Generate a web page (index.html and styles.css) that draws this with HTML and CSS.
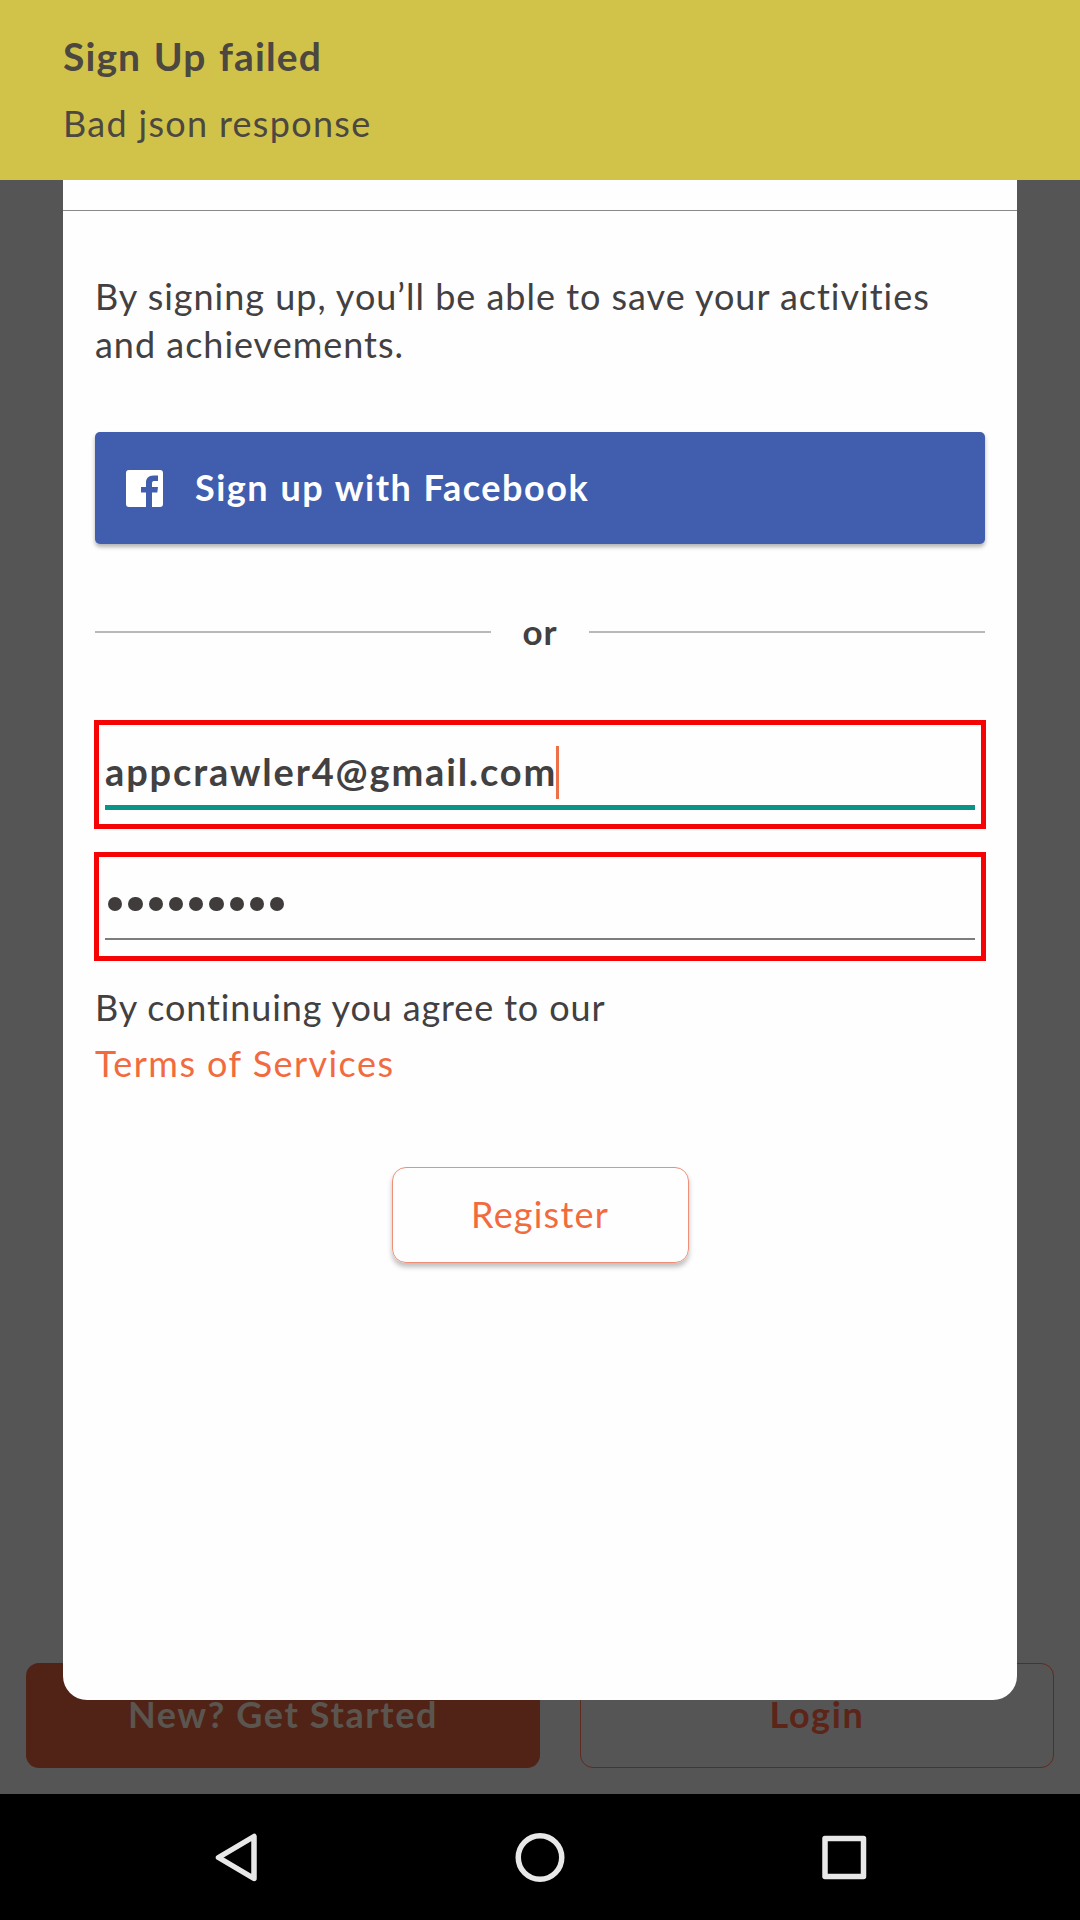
FILE: index.html
```
<!DOCTYPE html>
<html lang="en">
<head>
<meta charset="utf-8">
<title>Sign Up</title>
<link rel="stylesheet" href="styles.css">
</head>
<body>
<header class="banner">
  <h1 class="banner-title">Sign Up failed</h1>
  <p class="banner-text">Bad json response</p>
</header>
<main class="stage">
  <div class="welcome-actions">
    <div class="welcome-btn filled">New? Get Started</div>
    <div class="welcome-btn outlined">Login</div>
  </div>
  <section class="dialog">
    <div class="dialog-head"></div>
    <p class="intro">By signing up, you’ll be able to save your activities<br>and achievements.</p>
    <div class="facebook">
      <svg class="fb-icon" viewBox="0 0 37 37"><path fill="#fff" d="M3 0H34Q37 0 37 3V34Q37 37 34 37H26V22.500H31.300L32 17H26V13.500C26 11.500 27 11 28.500 11H32V5.500H27.500C22.500 5.500 20 8.500 20 12.500V17H15V22.500H20V37H3Q0 37 0 34V3Q0 0 3 0Z"/></svg>
      <span class="facebook-label">Sign up with Facebook</span>
    </div>
    <div class="or-row"><i class="rule"></i><span class="or">or</span><i class="rule"></i></div>
    <div class="field focused"><div class="field-line"><span class="email">appcrawler4@gmail.com</span><i class="caret"></i></div></div>
    <div class="field"><div class="field-line"><div class="dots"><i></i><i></i><i></i><i></i><i></i><i></i><i></i><i></i><i></i></div></div></div>
    <p class="agree">By continuing you agree to our</p>
    <p class="terms">Terms of Services</p>
    <div class="register">Register</div>
  </section>
</main>
<nav class="navbar">
  <svg class="nav-icon" viewBox="0 0 56 56"><path d="M10.500 28.500L46 7.500V49.500Z"/></svg>
  <svg class="nav-icon" viewBox="0 0 56 56"><circle cx="28" cy="28.500" r="21.750"/></svg>
  <svg class="nav-icon" viewBox="0 0 56 56"><rect x="9" y="9.500" width="38.500" height="38"/></svg>
</nav>
</body>
</html>
```
FILE: styles.css
```
* { box-sizing: border-box; margin: 0; padding: 0; }
body { width: 1080px; height: 1920px; display: flex; flex-direction: column; overflow: hidden; background: #000; color: #424041; font: 400 36px/48px Lato, "Noto Sans", sans-serif; letter-spacing: 1px; }
.banner { height: 180px; padding: 32px 63px 0; background: #d1c34a; color: #4c4740; }
.banner-title { font-size: 39px; font-weight: 700; line-height: 48px; letter-spacing: 1.1px; word-spacing: 2px; }
.banner-text { margin-top: 19px; letter-spacing: 1.3px; }
.stage { position: relative; height: 1614px; display: flex; align-items: flex-end; background: #555; }
.welcome-actions { flex: 1; display: flex; gap: 40px; padding: 0 26px 26px; }
.welcome-btn { height: 105px; padding-top: 27px; border-radius: 13px; text-align: center; font-weight: 700; letter-spacing: 1.6px; }
.filled { width: 514px; background: #512316; color: #5b5550; }
.outlined { width: 474px; border: 1px solid #5e2b20; padding-top: 26px; color: #5d2418; }
.dialog { position: absolute; left: 63px; top: 0; width: 954px; height: 1520px; padding: 0 32px; background: #fefefe; border-radius: 0 0 24px 24px; }
.dialog-head { height: 31px; margin: 0 -32px; border-bottom: 1px solid #8a8a8a; }
.intro { margin-top: 62px; line-height: 47.5px; letter-spacing: 0.98px; }
.facebook { margin-top: 64px; height: 112px; display: flex; align-items: center; gap: 32px; padding-left: 31px; border-radius: 5px; background: #415dae; color: #fff; font-weight: 700; letter-spacing: 1.5px; word-spacing: 1px; box-shadow: 0 3px 4px rgba(0,0,0,.3); }
.facebook-label { padding-bottom: 2px; }
.fb-icon { width: 37px; height: 37px; }
.or-row { margin-top: 63px; height: 50px; display: flex; align-items: center; justify-content: space-between; font-size: 35px; font-weight: 700; }
.or { padding-bottom: 2px; }
.rule { width: 396px; height: 2px; background: #b9b9b9; }
.field { height: 109px; margin: 23px -1px 0; border: 5px solid #f40404; padding: 0 6px; }
.focused { margin-top: 63px; }
.field-line { height: 83px; display: flex; align-items: center; padding-top: 13px; border-bottom: 2px solid #7d7d7d; }
.focused .field-line { height: 85px; padding-top: 14px; border-bottom: 5px solid #0a9488; font-size: 38px; font-weight: 700; letter-spacing: 1.85px; }
.email { width: 451px; padding-bottom: 3px; white-space: nowrap; }
.caret { width: 3px; height: 53px; background: #ee7048; }
.dots { display: flex; gap: 6px; padding-left: 3px; }
.dots i { width: 14.250px; height: 14.250px; border-radius: 50%; background: #403c3c; }
.agree { margin-top: 22px; letter-spacing: 0.87px; }
.terms { margin-top: 8px; color: #f26b3f; letter-spacing: 1.45px; }
.register { width: 297px; height: 96px; margin: 80px auto 0; padding-top: 22px; border: 1px solid #ee8f78; border-radius: 14px; text-align: center; color: #f26b3f; letter-spacing: 1.2px; box-shadow: 0 4px 5px rgba(0,0,0,.25); }
.navbar { height: 126px; display: flex; justify-content: center; align-items: center; gap: 248px; background: #000; }
.nav-icon { width: 56px; height: 56px; fill: none; stroke: #e8e8e8; stroke-width: 5.500; stroke-linejoin: round; }
```
